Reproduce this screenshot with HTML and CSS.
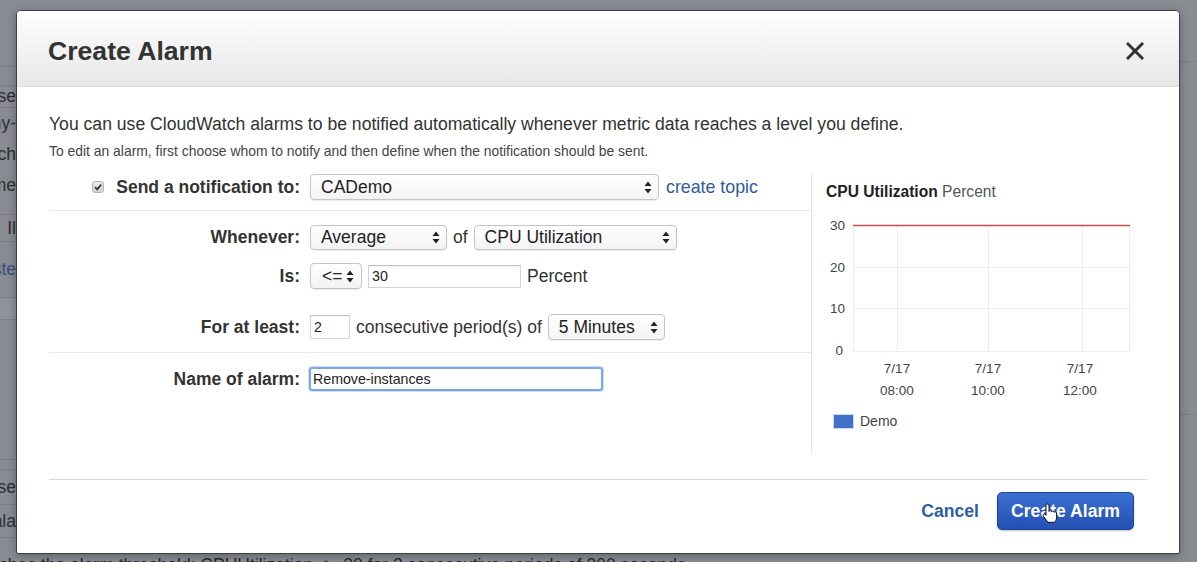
FILE: index.html
```html
<!DOCTYPE html>
<html>
<head>
<meta charset="utf-8">
<title>Create Alarm</title>
<link rel="stylesheet" href="styles.css">
</head>
<body>
<div class="page">
  <div class="page-main">
    <div class="strip strip-left">
      <div class="cell c-a"></div>
      <div class="cell c-b"></div>
      <div class="cell c-c"><span>Choose</span></div>
      <div class="cell c-d">
        <div class="ln"><span>Dummy-</span></div>
        <div class="ln"><span>Launch</span></div>
        <div class="ln"><span>Name</span></div>
      </div>
      <div class="cell c-e"><span>Il</span></div>
      <div class="cell c-f link"><span>Auto Scaling Groupste</span></div>
      <div class="cell c-g light"></div>
      <div class="cell c-h"></div>
      <div class="cell c-i"></div>
      <div class="cell c-j"><span>Increase</span></div>
      <div class="cell c-k"><span>Scala</span></div>
      <div class="cell c-l"></div>
    </div>
    <div class="page-center"></div>
    <div class="strip strip-right">
      <div class="cell r-a"></div>
      <div class="cell r-b"></div>
      <div class="cell r-c"></div>
    </div>
  </div>
  <div class="page-foot">ches the alarm threshold: CPUUtilization &lt;= 30 for 2 consecutive periods of 300 seconds.</div>
</div>

<div class="modal">
  <div class="modal-header">
    <h1 class="modal-title">Create Alarm</h1>
    <svg class="close" width="18" height="18" viewBox="0 0 18 18"><path d="M2 2 L16 16 M16 2 L2 16" stroke="#333" stroke-width="3" stroke-linecap="square"/></svg>
  </div>
  <div class="modal-body">
    <p class="intro">You can use CloudWatch alarms to be notified automatically whenever metric data reaches a level you define.</p>
    <p class="sub">To edit an alarm, first choose whom to notify and then define when the notification should be sent.</p>
    <div class="main">
      <div class="form">
        <div class="group g1">
          <div class="row">
            <div class="label label-check">
              <span class="checkbox"><svg width="10" height="10" viewBox="0 0 10 10"><path d="M2 5.2 L4.2 7.4 L8.2 2.6" fill="none" stroke="#333" stroke-width="1.8"/></svg></span>
              <span>Send a notification to:</span>
            </div>
            <div class="select w-topic"><span>CADemo</span><svg class="arr" width="8" height="13" viewBox="0 0 8 13"><path d="M4 0.5 L7.5 5 H0.5 Z M4 12.5 L7.5 8 H0.5 Z" fill="#222"/></svg></div>
            <a class="link-topic">create topic</a>
          </div>
        </div>
        <div class="group g2">
          <div class="row r-when">
            <div class="label">Whenever:</div>
            <div class="select w-avg"><span>Average</span><svg class="arr" width="8" height="13" viewBox="0 0 8 13"><path d="M4 0.5 L7.5 5 H0.5 Z M4 12.5 L7.5 8 H0.5 Z" fill="#222"/></svg></div>
            <span class="txt">of</span>
            <div class="select w-metric"><span>CPU Utilization</span><svg class="arr" width="8" height="13" viewBox="0 0 8 13"><path d="M4 0.5 L7.5 5 H0.5 Z M4 12.5 L7.5 8 H0.5 Z" fill="#222"/></svg></div>
          </div>
          <div class="row r-is">
            <div class="label">Is:</div>
            <div class="select w-op"><span>&lt;=</span><svg class="arr" width="8" height="13" viewBox="0 0 8 13"><path d="M4 0.5 L7.5 5 H0.5 Z M4 12.5 L7.5 8 H0.5 Z" fill="#222"/></svg></div>
            <div class="input w-thr">30</div>
            <span class="txt">Percent</span>
          </div>
          <div class="row r-for">
            <div class="label">For at least:</div>
            <div class="input w-per">2</div>
            <span class="txt">consecutive period(s) of</span>
            <div class="select w-min"><span>5 Minutes</span><svg class="arr" width="8" height="13" viewBox="0 0 8 13"><path d="M4 0.5 L7.5 5 H0.5 Z M4 12.5 L7.5 8 H0.5 Z" fill="#222"/></svg></div>
          </div>
        </div>
        <div class="group g3">
          <div class="row">
            <div class="label">Name of alarm:</div>
            <div class="input focus w-name">Remove-instances</div>
          </div>
        </div>
      </div>
      <div class="chart-panel">
        <div class="chart-title"><b>CPU Utilization</b> Percent</div>
        <svg class="chart" width="330" height="186" viewBox="0 0 330 186">
          <g stroke="#ededed" stroke-width="1">
            <line x1="42" y1="54.5" x2="319" y2="54.5"/>
            <line x1="42" y1="95.5" x2="319" y2="95.5"/>
            <line x1="42" y1="138.5" x2="319" y2="138.5"/>
            <line x1="42.5" y1="12" x2="42.5" y2="139"/>
            <line x1="86.5" y1="12" x2="86.5" y2="139"/>
            <line x1="177.5" y1="12" x2="177.5" y2="139"/>
            <line x1="271.5" y1="12" x2="271.5" y2="139"/>
            <line x1="318.5" y1="12" x2="318.5" y2="139"/>
          </g>
          <line x1="42" y1="12.5" x2="319" y2="12.5" stroke="#cc4b4f" stroke-width="1.6"/>
          <g font-family="Liberation Sans, Arial, sans-serif" font-size="13.5" fill="#444" text-anchor="end">
            <text x="34" y="17">30</text>
            <text x="34" y="59">20</text>
            <text x="34" y="100">10</text>
            <text x="32" y="142">0</text>
          </g>
          <g font-family="Liberation Sans, Arial, sans-serif" font-size="13.5" fill="#444" text-anchor="middle">
            <text x="86" y="160">7/17</text>
            <text x="86" y="182">08:00</text>
            <text x="177" y="160">7/17</text>
            <text x="177" y="182">10:00</text>
            <text x="269" y="160">7/17</text>
            <text x="269" y="182">12:00</text>
          </g>
        </svg>
        <div class="legend"><span class="swatch"></span><span>Demo</span></div>
      </div>
    </div>
  </div>
  <div class="modal-footer">
    <a class="cancel">Cancel</a>
    <div class="btn-primary">Create Alarm
      <svg class="hand" width="17" height="21" viewBox="0 0 17 21"><path d="M5 2.5 a1.5 1.5 0 0 1 3 0 V8.5 a1.4 1.4 0 0 1 2.7 0.3 a1.4 1.4 0 0 1 2.6 0.5 a1.3 1.3 0 0 1 2.3 0.8 V14.5 c0 2 -0.9 3.6 -2 4.8 H7 L2.3 13.2 a1.3 1.3 0 0 1 2 -1.7 L5 12.3 Z" fill="#fff" stroke="#111" stroke-width="1"/></svg>
    </div>
  </div>
</div>
</body>
</html>
```
FILE: styles.css
```css
* { box-sizing: border-box; }
html, body { margin: 0; height: 562px; overflow: hidden; }
body {
  background: #898c93;
  font-family: "Liberation Sans", Arial, sans-serif;
  position: relative;
  color: #333;
}

/* background page (dimmed) */
.page { height: 562px; display: flex; flex-direction: column; }
.page-main { flex: 1; display: flex; min-height: 0; }
.page-center { flex: 1; }
.strip { display: flex; flex-direction: column; overflow: hidden; }
.strip-left { width: 16px; }
.strip-right { width: 17px; }
.cell {
  border-bottom: 1px solid #7b7e85;
  display: flex; justify-content: flex-end; align-items: center;
  overflow: hidden; white-space: nowrap;
  font-size: 17.5px; color: #2e3035;
}
.cell.light { background: #8f939a; }
.cell.link { color: #3a4d7c; }
.c-a { height: 67px; }
.c-b { height: 19px; }
.c-c { height: 22px; }
.c-d { height: 107px; flex-direction: column; justify-content: flex-start; align-items: stretch; }
.ln { height: 31px; display: flex; justify-content: flex-end; align-items: center; overflow: hidden; }
.c-e { height: 27px; }
.c-f { height: 56px; }
.c-g { height: 22px; }
.c-h { height: 140px; }
.c-i { height: 10px; }
.c-j { height: 35px; }
.c-k { height: 33px; }
.c-l { flex: 1; border-bottom: none; }
.r-a { height: 62px; }
.r-b { height: 353px; }
.r-c { flex: 1; border-bottom: none; }
.page-foot {
  height: 12px; line-height: 30px; font-size: 17.5px; color: #26282c;
  white-space: nowrap; overflow: hidden; margin-left: -1px;
}

/* modal */
.modal {
  position: absolute; left: 16px; top: 10px;
  width: 1164px; height: 544px;
  background: #fff;
  border: 1px solid #3f4045;
  border-radius: 5px 5px 2px 2px;
  box-shadow: 0 2px 10px rgba(0,0,0,0.3);
  display: flex; flex-direction: column;
  overflow: hidden;
}
.modal-header {
  height: 76px; flex: none;
  background: linear-gradient(#fefefe, #e7e7e7);
  border-bottom: 1px solid #dcdcdc;
  display: flex; align-items: center; justify-content: space-between;
  padding: 5px 35px 0 31px;
}
.modal-title { margin: 0; font-size: 26.6px; font-weight: bold; color: #333; }
.close { display: block; }

.modal-body { padding: 27px 32px 0; flex: none; }
.intro { margin: 0; font-size: 17.6px; line-height: 20px; color: #333; }
.sub { margin: 9px 0 0; font-size: 13.9px; line-height: 16px; color: #444; }

.main { display: flex; margin-top: 14px; }
.form { width: 762px; flex: none; }
.group { border-bottom: 1px solid #ebebeb; }
.g1 { padding: 1px 0 10px; }
.g2 { padding: 14px 0 12px; }
.g3 { padding-top: 13px; border-bottom: none; }
.row { display: flex; align-items: center; gap: 6px; height: 26px; }
.r-when { height: 25px; }
.r-is { margin-top: 13px; }
.r-for { margin-top: 25px; }
.label {
  width: 251px; flex: none; margin-right: 4px;
  text-align: right; font-weight: bold; font-size: 17.5px; color: #333;
}
.label-check { display: flex; justify-content: flex-end; align-items: center; gap: 12px; }
.checkbox {
  width: 12px; height: 12px; border-radius: 3px;
  border: 1px solid #b3b3b3;
  background: linear-gradient(#ececec, #d2d2d2);
  display: flex; align-items: center; justify-content: center;
}
.checkbox svg { display: block; }
.txt { font-size: 17.5px; color: #333; }

.select {
  height: 26px;
  border: 1px solid #c4c4c4;
  border-radius: 4px;
  background: linear-gradient(#ffffff, #f3f3f3);
  box-shadow: 0 1px 1px rgba(0,0,0,0.08);
  display: flex; align-items: center; justify-content: space-between;
  padding: 0 6px 0 10px;
  font-size: 17.5px; color: #222;
  flex: none;
}
.r-when .select { height: 25px; }
.arr { display: block; }
.w-topic { width: 349px; }
.w-avg { width: 137px; }
.w-metric { width: 203px; }
.w-op { width: 52px; padding-left: 11px; padding-right: 7px; }
.w-min { width: 117px; }

.input {
  height: 23px;
  border: 1px solid #d3d3d3;
  border-top-color: #c2c2c2;
  box-shadow: inset 0 1px 1px rgba(0,0,0,0.05);
  font-size: 14.2px; color: #222;
  padding-left: 3px;
  display: flex; align-items: center;
  flex: none;
}
.w-thr { width: 153px; }
.w-per { width: 40px; height: 24px; }
.w-name { width: 294px; height: 24px; margin-left: -1px; }
.input.focus {
  border: 2px solid #78a8e6;
  border-radius: 3px;
  box-shadow: 0 0 1px 1px rgba(120,168,230,0.4);
  padding-left: 2px;
}
.link-topic { color: #2f5b9f; font-size: 17.8px; margin-left: 1px; }

.chart-panel {
  flex: 1; height: 280px;
  border-left: 1px solid #e6e6e6;
  padding-left: 14px;
}
.chart-title { margin-top: 10px; font-size: 15.6px; line-height: 18px; color: #555; }
.chart-title b { color: #222; }
.chart { display: block; margin: 12px 0 0 -15px; }
.legend { display: flex; align-items: center; gap: 6px; margin: 14px 0 0 7px; font-size: 14px; color: #444; }
.swatch {
  width: 21px; height: 15px;
  background: #4270c6;
  border: 1px solid #c9d7ec;
}

.modal-footer {
  margin: 26px 32px 0;
  border-top: 1px solid #d9d9d9;
  padding: 12px 13px 0 0;
  display: flex; justify-content: flex-end; align-items: center; gap: 18px;
}
.cancel { color: #2d5ea5; font-weight: bold; font-size: 17.6px; }
.btn-primary {
  position: relative;
  height: 38px; width: 137px;
  border: 1px solid #1e439b;
  border-radius: 5px;
  background: linear-gradient(#3b6fd2, #2251b2);
  color: #fff; font-weight: bold; font-size: 17.6px;
  display: flex; align-items: center; justify-content: center;
  box-shadow: 0 1px 2px rgba(0,0,0,0.25);
}
.hand { position: absolute; left: 43px; top: 10px; }
```
